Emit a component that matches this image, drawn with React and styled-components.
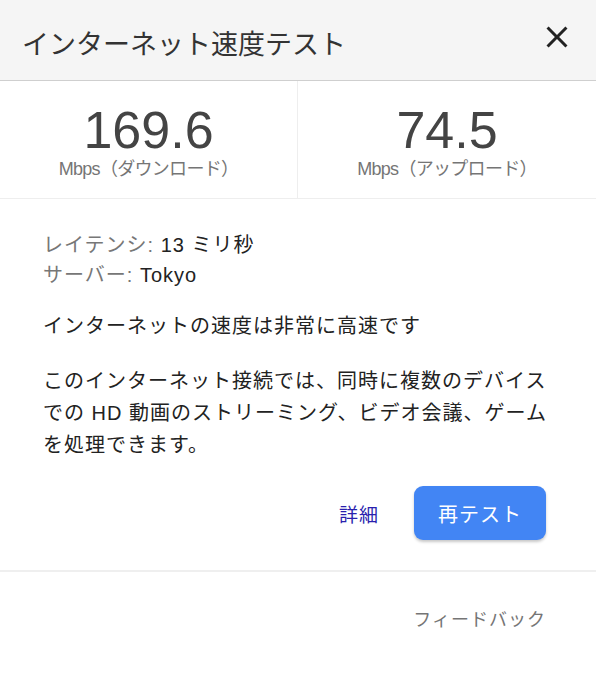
import React from "react";
import styled, { createGlobalStyle } from "styled-components";

const GlobalStyle = createGlobalStyle`
  html, body {
    margin: 0;
    padding: 0;
    background: #fff;
  }
  body {
    font-family: "Liberation Sans", Arial, "Noto Sans CJK JP", sans-serif;
    color: #222;
  }
`;

const Dialog = styled.div`
  width: 596px;
  display: flex;
  flex-direction: column;
  background: #fff;
`;

const Header = styled.div`
  height: 81px;
  box-sizing: border-box;
  display: flex;
  justify-content: space-between;
  align-items: flex-start;
  padding: 0 21px 0 22px;
  background: #f5f5f5;
  border-bottom: 1px solid #cfcfcf;
`;

const Title = styled.div`
  margin-top: 27px;
  font-size: 27px;
  line-height: 36px;
  color: #333;
`;

const CloseButton = styled.button`
  margin-top: 19px;
  width: 36px;
  height: 36px;
  padding: 0;
  border: none;
  background: none;
  color: #222;
  cursor: pointer;
  svg {
    display: block;
  }
`;

const Stats = styled.div`
  display: grid;
  grid-template-columns: 297px 1fr;
  border-bottom: 1px solid #eeeeee;
`;

const Stat = styled.div`
  display: flex;
  flex-direction: column;
  align-items: center;
  padding: 23px 0 19px;
  border-left: ${({ $divided }) => ($divided ? "1px solid #eeeeee" : "none")};
`;

const StatValue = styled.div`
  font-size: 52px;
  line-height: 52px;
  color: #444;
`;

const StatLabel = styled.div`
  margin-top: 3px;
  font-size: 18px;
  line-height: 20px;
  letter-spacing: -0.7px;
  color: #757575;
`;

const Body = styled.div`
  padding: 31px 48px 0 43px;
  font-size: 20px;
  letter-spacing: 1px;
`;

const InfoList = styled.div`
  line-height: 30px;
`;

const InfoRow = styled.div`
  color: #222;
`;

const InfoKey = styled.span`
  color: #777;
`;

const Summary = styled.p`
  margin: 20px 0 0;
  line-height: 32px;
  color: #222;
`;

const Description = styled.p`
  margin: 23px 0 0;
  line-height: 32px;
  color: #222;
`;

const Actions = styled.div`
  display: flex;
  justify-content: flex-end;
  align-items: center;
  gap: 35px;
  margin: 25px 2px 0 0;
  padding-bottom: 30px;
`;

const LinkButton = styled.a`
  font-size: 19px;
  letter-spacing: 1px;
  color: #2a1fae;
  text-decoration: none;
  cursor: pointer;
`;

const PrimaryButton = styled.button`
  height: 54px;
  padding: 0 24px;
  border: none;
  border-radius: 9px;
  background: #4285f4;
  color: #fff;
  font-family: inherit;
  font-size: 20px;
  letter-spacing: 1px;
  box-shadow: 0 2px 3px rgba(0, 0, 0, 0.22);
  cursor: pointer;
`;

const Footer = styled.div`
  display: flex;
  justify-content: flex-end;
  padding: 36px 50px 28px;
  border-top: 2px solid #efefef;
`;

const FeedbackLink = styled.a`
  font-size: 18px;
  line-height: 24px;
  letter-spacing: 1px;
  color: #757575;
  cursor: pointer;
`;

const CloseIcon = () => (
  <svg width="36" height="36" viewBox="0 0 24 24" fill="currentColor">
    <path d="M19 6.41L17.59 5 12 10.59 6.41 5 5 6.41 10.59 12 5 17.59 6.41 19 12 13.41 17.59 19 19 17.59 13.41 12z" />
  </svg>
);

const stats = [
  { value: "169.6", label: "Mbps（ダウンロード）" },
  { value: "74.5", label: "Mbps（アップロード）" },
];

const App = () => {
  return (
    <>
      <GlobalStyle />
      <Dialog>
        <Header>
          <Title>インターネット速度テスト</Title>
          <CloseButton aria-label="閉じる">
            <CloseIcon />
          </CloseButton>
        </Header>
        <Stats>
          {stats.map((s, i) => (
            <Stat key={s.label} $divided={i > 0}>
              <StatValue>{s.value}</StatValue>
              <StatLabel>{s.label}</StatLabel>
            </Stat>
          ))}
        </Stats>
        <Body>
          <InfoList>
            <InfoRow>
              <InfoKey>レイテンシ:</InfoKey> 13 ミリ秒
            </InfoRow>
            <InfoRow>
              <InfoKey>サーバー:</InfoKey> Tokyo
            </InfoRow>
          </InfoList>
          <Summary>インターネットの速度は非常に高速です</Summary>
          <Description>
            このインターネット接続では、同時に複数のデバイスでの HD
            動画のストリーミング、ビデオ会議、ゲームを処理できます。
          </Description>
          <Actions>
            <LinkButton>詳細</LinkButton>
            <PrimaryButton>再テスト</PrimaryButton>
          </Actions>
        </Body>
        <Footer>
          <FeedbackLink>フィードバック</FeedbackLink>
        </Footer>
      </Dialog>
    </>
  );
};

export default App;
